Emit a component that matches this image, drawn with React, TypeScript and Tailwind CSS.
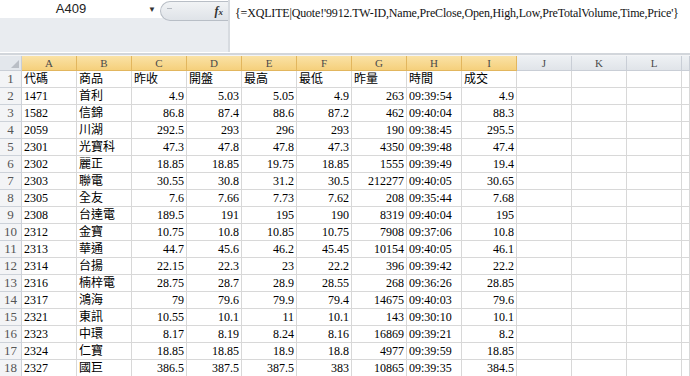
const cols = ['A', 'B', 'C', 'D', 'E', 'F', 'G', 'H', 'I', 'J', 'K', 'L', ''];

const rows: string[][] = [
  ['代碼', '商品', '昨收', '開盤', '最高', '最低', '昨量', '時間', '成交'],
  ['1471', '首利', '4.9', '5.03', '5.05', '4.9', '263', '09:39:54', '4.9'],
  ['1582', '信錦', '86.8', '87.4', '88.6', '87.2', '462', '09:40:04', '88.3'],
  ['2059', '川湖', '292.5', '293', '296', '293', '190', '09:38:45', '295.5'],
  ['2301', '光寶科', '47.3', '47.8', '47.8', '47.3', '4350', '09:39:48', '47.4'],
  ['2302', '麗正', '18.85', '18.85', '19.75', '18.85', '1555', '09:39:49', '19.4'],
  ['2303', '聯電', '30.55', '30.8', '31.2', '30.5', '212277', '09:40:05', '30.65'],
  ['2305', '全友', '7.6', '7.66', '7.73', '7.62', '208', '09:35:44', '7.68'],
  ['2308', '台達電', '189.5', '191', '195', '190', '8319', '09:40:04', '195'],
  ['2312', '金寶', '10.75', '10.8', '10.85', '10.75', '7908', '09:37:06', '10.8'],
  ['2313', '華通', '44.7', '45.6', '46.2', '45.45', '10154', '09:40:05', '46.1'],
  ['2314', '台揚', '22.15', '22.3', '23', '22.2', '396', '09:39:42', '22.2'],
  ['2316', '楠梓電', '28.75', '28.7', '28.9', '28.55', '268', '09:36:26', '28.85'],
  ['2317', '鴻海', '79', '79.6', '79.9', '79.4', '14675', '09:40:03', '79.6'],
  ['2321', '東訊', '10.55', '10.1', '11', '10.1', '143', '09:30:10', '10.1'],
  ['2323', '中環', '8.17', '8.19', '8.24', '8.16', '16869', '09:39:21', '8.2'],
  ['2324', '仁寶', '18.85', '18.85', '18.9', '18.8', '4977', '09:39:59', '18.85'],
  ['2327', '國巨', '386.5', '387.5', '387.5', '383', '10865', '09:39:35', '384.5'],
];

function HeaderCell({ label, selected }: { label: string; selected: boolean }) {
  return (
    <div
      className={
        selected
          ? 'h-[15px] border-r border-b border-[#e2b65e] bg-[linear-gradient(to_bottom,#fae2a6,#f5d07c)] flex items-center justify-center text-[11px] text-[#4a4a4a]'
          : 'h-[15px] border-r border-b border-[#c9ced6] bg-[linear-gradient(to_bottom,#eef1f4,#e0e4e9)] flex items-center justify-center text-[11px] text-[#4a4a4a]'
      }>
      {label}
    </div>
  );
}

function Cell({ value, row, col }: { value?: string; row: number; col: number }) {
  const left = row === 0 || col === 0 || col === 1 || col === 7;
  return (
    <div
      className={`h-[17px] border-r border-b border-[#d8d8d8] flex items-center overflow-hidden whitespace-nowrap leading-none ${
        left ? 'justify-start pl-[2px]' : 'justify-end pr-[2px]'
      }`}>
      {value}
    </div>
  );
}

function App() {
  return (
    <div className="w-[690px] h-[376px] overflow-hidden bg-white text-[12px] text-black font-['Liberation_Serif','Noto_Sans_CJK_TC',serif]">
      {/* formula bar */}
      <div className="flex h-[52px]">
        <div className="w-[228px] bg-[#e9ecf0]">
          <div className="flex h-[22px] items-start bg-[linear-gradient(to_bottom,#ffffff_18px,#e9ecf0_18px)]">
            <div className="w-[160px] h-[18px] flex items-center">
              <span className="w-[142px] text-center text-[13px] font-['Liberation_Sans',sans-serif] text-[#222]">A409</span>
              <span className="text-[8px] text-[#333] ml-[6px] mt-[1px]">▼</span>
            </div>
            <div className="w-[68px] h-[20px] mt-[1px] rounded-l-full border border-r-0 border-[#b8bec6] bg-[linear-gradient(to_bottom,#f1f3f5,#dfe3e8)] flex items-center justify-between pl-[6px] pr-[5px]">
              <span className="w-[5px] h-[1px] bg-[#b5bac1] -mt-[6px]" />
              <span className="italic font-bold text-[12px] text-[#333]">
                f<span className="text-[9px]">x</span>
              </span>
            </div>
          </div>
        </div>
        <div className="flex-1 bg-white border-l-2 border-[#d7dbe0] pl-[5px] pt-[4px] text-[12px] tracking-[-0.17px] text-[#111] whitespace-nowrap overflow-hidden">
          {"{=XQLITE|Quote!'9912.TW-ID,Name,PreClose,Open,High,Low,PreTotalVolume,Time,Price'}"}
        </div>
      </div>
      <div className="h-[1px] bg-white" />
      <div className="h-[2px] bg-[#d2d6db]" />
      <div className="h-[1px] bg-[#f3f4f6]" />

      {/* sheet grid */}
      <div className="grid grid-cols-[22px_repeat(12,55px)_1fr]">
        <div className="h-[15px] border-r border-b border-[#c9ced6] bg-[#e3e7ec] flex items-end justify-end pr-[2px] pb-[2px]">
          <svg width="8" height="8" viewBox="0 0 8 8">
            <polygon points="8,0 8,8 0,8" fill="#b9bec5" />
          </svg>
        </div>
        {cols.map((c, i) => (
          <HeaderCell key={i} label={c} selected={i < 9} />
        ))}
        {rows.map((r, ri) => (
          <div key={ri} className="contents">
            <div className="h-[17px] border-r border-b border-[#cdd2d9] bg-[#f3f4f6] flex items-center justify-center text-[13px] text-[#555]">
              {ri + 1}
            </div>
            {cols.map((_, ci) => (
              <Cell key={ci} value={r[ci]} row={ri} col={ci} />
            ))}
          </div>
        ))}
      </div>
    </div>
  );
}

export default App;
